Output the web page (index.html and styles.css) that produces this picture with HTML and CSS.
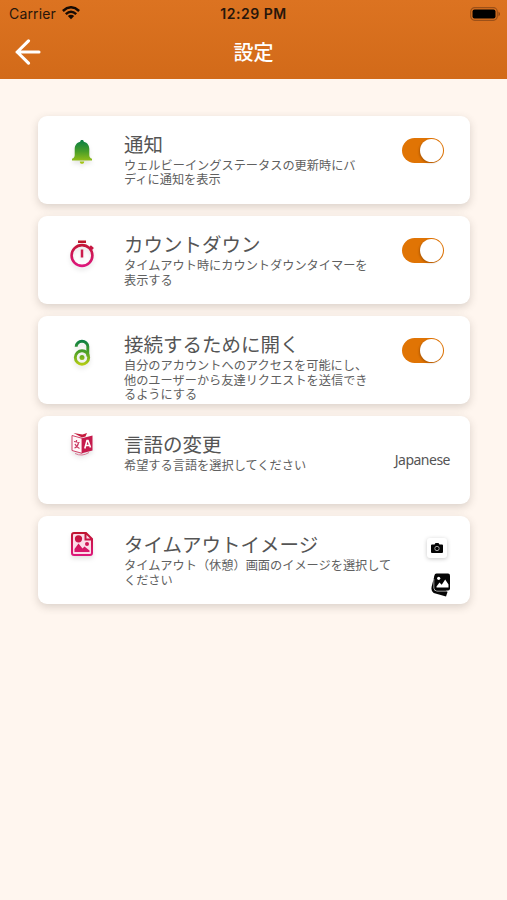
FILE: index.html
```html
<!DOCTYPE html>
<html lang="ja">
<head>
<meta charset="utf-8">
<title>設定</title>
<link rel="stylesheet" href="styles.css">
</head>
<body>
<svg class="defs" width="0" height="0" aria-hidden="true">
  <defs>
    <linearGradient id="green" gradientUnits="userSpaceOnUse" x1="0" y1="1" x2="0" y2="26"><stop offset="0" stop-color="#087d45"/><stop offset=".45" stop-color="#479d28"/><stop offset="1" stop-color="#b6cd13"/></linearGradient>
    <linearGradient id="pink" gradientUnits="userSpaceOnUse" x1="0" y1="0" x2="0" y2="28"><stop offset="0" stop-color="#bd1528"/><stop offset="1" stop-color="#e01883"/></linearGradient>
  </defs>
</svg>
<header class="header">
  <div class="status">
    <div class="carrier">Carrier
      <svg width="18" height="14" viewBox="0 0 18 14"><g fill="none" stroke="#160b04" stroke-width="2.5"><path d="M.9 5Q9-2.4 17.1 5"/><path d="M3.800 8.100Q9 3.500 14.200 8.100"/></g><path d="M5.800 10.100Q9 7.400 12.200 10.100L9 13.300z" fill="#160b04"/></svg>
    </div>
    <div class="time">12:29 PM</div>
    <svg class="battery" width="31" height="14" viewBox="0 0 31 14"><rect x=".7" y=".7" width="26.600" height="12.600" rx="4" fill="none" stroke="#9c5018" stroke-width="1.200"/><rect x="2.500" y="2.500" width="23" height="9" rx="2" fill="#000"/><path d="M28.500 4.500Q31.500 7 28.500 9.500z" fill="#8b4310"/></svg>
  </div>
  <div class="nav">
    <svg class="back" width="26" height="26" viewBox="0 0 26 26"><path d="M24 13H2M13.500 1.800L2.200 13l11.300 11.200" fill="none" stroke="#fff" stroke-width="3.100" stroke-linecap="round" stroke-linejoin="round"/></svg>
    <h1>設定</h1>
  </div>
</header>
<main class="list">
  <section class="card">
    <svg class="icon" width="28" height="28" viewBox="0 0 28 28"><path d="M14 1c1.100 0 1.800.7 1.800 1.700 3.800 1 5.500 3.800 5.500 7.300v6c0 2 .8 3 2.700 3.800v1.700H4v-1.700C5.900 19 6.700 18 6.700 16v-6c0-3.500 1.700-6.300 5.500-7.300C12.200 1.700 12.900 1 14 1zM11.800 22.500h4.400c0 1.600-.8 2.300-2.200 2.300s-2.200-.7-2.200-2.300z" fill="url(#green)"/></svg>
    <div class="text"><h2>通知</h2><p>ウェルビーイングステータスの更新時にバ<br>ディに通知を表示</p></div>
    <div class="switch"><span></span></div>
  </section>
  <section class="card">
    <svg class="icon timer" width="28" height="28" viewBox="0 0 28 28"><g fill="none" stroke="url(#pink)"><circle cx="14" cy="15.500" r="10.400" stroke-width="2.600"/><path d="M14.010 9.500v8" stroke="#cb1c4c" stroke-width="2.500"/><path d="M22 6.200l3 2.800" stroke-width="2.600"/></g><path d="M10 .5h8V3h-8z" fill="#bd1528"/></svg>
    <div class="text"><h2>カウントダウン</h2><p>タイムアウト時にカウントダウンタイマーを<br>表示する</p></div>
    <div class="switch"><span></span></div>
  </section>
  <section class="card">
    <svg class="icon" width="28" height="28" viewBox="0 0 28 28"><g fill="none" stroke="url(#green)" stroke-width="2.900"><path d="M8.200 7.800V7.500a5.800 5.200 0 0 1 11.600 0v10"/><circle cx="14" cy="18.500" r="6.700"/></g><circle cx="14" cy="18.500" r="2.500" fill="url(#green)"/></svg>
    <div class="text"><h2>接続するために開く</h2><p>自分のアカウントへのアクセスを可能にし、<br>他のユーザーから友達リクエストを送信でき<br>るようにする</p></div>
    <div class="switch"><span></span></div>
  </section>
  <section class="card">
    <svg class="icon raised" width="28" height="28" viewBox="0 0 28 28"><path d="M4 5.500l10 2.800v15L4 20.500z" fill="#fff7f9" stroke="#cf4167" stroke-width="1"/><path d="M14 8.300l10.500-2.800v15L14 23.300z" fill="#c61b4d"/><path d="M6 11.500l5.500 1M8.500 10v2M10.500 13q-1 4-4 5M7 14q1.500 3.500 4.500 4.500" fill="none" stroke="#ca3962" stroke-width="1.200"/><path d="M16.800 18.500l2.200-8h1l2.500 7M17.500 15.500h4" fill="none" stroke="#fff" stroke-width="1.600"/><path d="M5.500 3l9 1.500L19 3l-1.500 3.500-3.500 1z" fill="#c61b3d"/><path d="M7 23.500q7 3.500 14-1" fill="none" stroke="#dc7795" stroke-width="1"/></svg>
    <div class="text"><h2>言語の変更</h2><p>希望する言語を選択してください</p></div>
    <div class="language">Japanese</div>
  </section>
  <section class="card">
    <svg class="icon raised" width="28" height="28" viewBox="0 0 28 28"><path d="M6 3h12l6 6v14q0 2-2 2H6q-2 0-2-2V5q0-2 2-2z" fill="#fbdde8"/><g fill="none" stroke="url(#pink)" stroke-width="2"><path d="M6 3h12l6 6v14q0 2-2 2H6q-2 0-2-2V5q0-2 2-2zM17.500 3v6.500H24"/></g><g fill="url(#pink)"><circle cx="10.500" cy="8.800" r="3.600"/><circle cx="19" cy="14" r="2"/><path d="M6.500 22v-3l4-5.500 4 5 2-2 5 4V22z"/></g></svg>
    <div class="text"><h2>タイムアウトイメージ</h2><p>タイムアウト（休憩）画面のイメージを選択して<br>ください</p></div>
    <div class="actions">
      <div class="camera"><svg width="12" height="10" viewBox="0 0 12 10"><path d="M1 1.500h2.500L4.500 0h3l1 1.500H11q1 0 1 1V9q0 1-1 1H1Q0 10 0 9V2.500q0-1 1-1z" fill="#050505"/><circle cx="6" cy="5.500" r="2.200" fill="none" stroke="#aaa" stroke-width="1"/></svg></div>
      <svg class="gallery" width="20" height="24" viewBox="0 0 20 24"><path d="M3.500 2.500L.7 13.500q-1 5 2 6.500L15 23.500l1.500-4.500z" fill="#050505"/><path d="M3 6v9q0 3 3 3h10" fill="none" stroke="#fff" stroke-width=".8"/><rect x="3.500" y=".5" width="15.500" height="17" rx="2" fill="#050505"/><path d="M5.500 13.500l3-4 2.200 2.200 3.500-5.200 3.300 5v3h-12z" fill="#fff"/><circle cx="7.700" cy="5.300" r="1.600" fill="#fff"/></svg>
    </div>
  </section>
</main>
</body>
</html>
```
FILE: styles.css
```css
* { box-sizing: border-box; }
body {
  margin: 0;
  min-height: 900px;
  background: #fff6ef;
  font-family: "Noto Sans CJK JP", sans-serif;
  color: #555;
}
.defs { display: block; }
h1, h2, p { margin: 0; }
.header {
  height: 79px;
  background: linear-gradient(#dc7321, #d26a19);
}
.status {
  display: grid;
  grid-template-columns: 1fr auto 1fr;
  align-items: center;
  height: 27px;
  padding: 0 6px 0 9px;
  font: 14px/27px Inter, sans-serif;
  color: #27160b;
}
.carrier { display: flex; align-items: center; gap: 6px; letter-spacing: .15px; }
.carrier svg { margin-top: -2px; }
.time { margin-right: 3px; font-weight: 600; letter-spacing: .5px; }
.battery { justify-self: end; }
.nav {
  display: grid;
  grid-template-columns: 1fr auto 1fr;
  align-items: center;
  height: 50px;
  padding: 0 15px;
}
h1 { font-size: 20px; line-height: 50px; font-weight: 500; color: #fff; }
.list {
  display: grid;
  gap: 12.100px;
  padding: 37px 37px 0 38px;
}
.card {
  display: flex;
  height: 88px;
  padding: 16px 19px 0 30px;
  border-radius: 9px;
  background: #fff;
  box-shadow: 0 3px 9px rgba(70, 60, 50, .2);
}
.icon {
  flex: none;
  margin: 7px 28px 0 0;
  filter: drop-shadow(0 3px 2px rgba(0, 0, 0, .1));
}
.timer { margin-top: 8px; }
.raised { margin-top: -2px; }
.text { flex: 1; min-width: 0; white-space: nowrap; }
h2 { font-size: 19.500px; line-height: 23px; font-weight: 400; }
p { margin-top: 3px; font-size: 12.200px; line-height: 14.400px; color: #606060; }
.switch {
  flex: none;
  width: 42px;
  height: 25px;
  margin: 6px 7px 0 0;
  padding: 1px;
  border-radius: 13px;
  background: #e07404;
}
.switch span {
  display: block;
  width: 23px;
  height: 23px;
  margin-left: auto;
  border-radius: 50%;
  background: #fff;
  box-shadow: -1px 1px 2px rgba(70, 30, 0, .3);
}
.language {
  margin: 18px 1px 0 0;
  font: 14px/20px "Noto Sans", sans-serif;
  letter-spacing: -.5px;
}
.actions {
  display: flex;
  flex: none;
  flex-direction: column;
  align-items: center;
  width: 26px;
  margin: 6px 1px 0 -30px;
}
.camera {
  display: grid;
  place-items: center;
  width: 20px;
  height: 20px;
  border-radius: 3px;
  background: #fff;
  box-shadow: 0 1px 4px rgba(0, 0, 0, .22);
}
.gallery { margin: 15px 0 0 7px; }
```
